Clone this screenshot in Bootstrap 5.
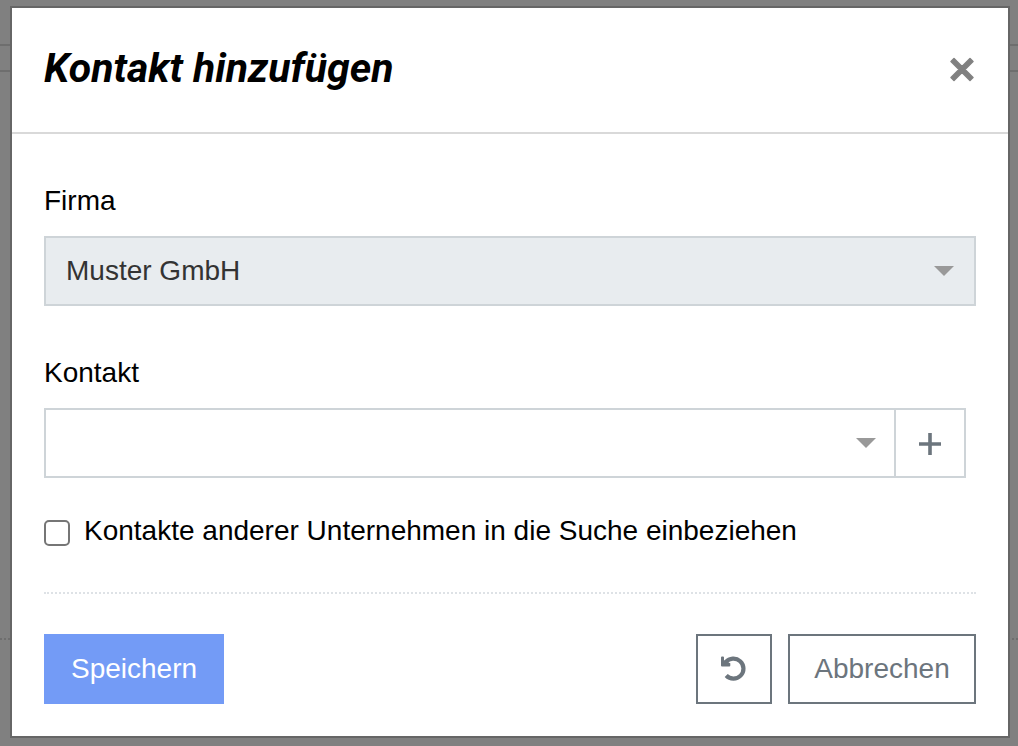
<!DOCTYPE html>
<html lang="de">
<head>
<meta charset="utf-8">
<meta name="viewport" content="width=device-width, initial-scale=1">
<title>Kontakt hinzufügen</title>
<link href="https://cdn.jsdelivr.net/npm/bootstrap@5.3.0/dist/css/bootstrap.min.css" rel="stylesheet">
<style>
  body { background: #808080; font-family: "Liberation Sans", Arial, sans-serif; font-size: 28px; line-height: 42px; color: #000; }
  .page-top { height: 44px; }
  .page-bar { height: 28px; border-top: 2px solid #6e6e6e; border-bottom: 2px solid #6e6e6e; }
  .page-main { height: 568px; border-bottom: 2px dotted #6e6e6e; }
  .contact-dialog { max-width: none; margin: 6px 8px 8px 10px; }
  .contact-dialog .modal-content { border: 2px solid #666; border-radius: 0; color: #000; }
  .contact-dialog .modal-header { border-bottom: 2px solid #d9d9d9; border-radius: 0; padding: 30px 32px 34px; }
  .contact-dialog .modal-title { font: italic 700 41px/60px Roboto, sans-serif; }
  .contact-dialog .modal-body { padding: 46px 32px 32px; }
  .field { margin-bottom: 46px; }
  .field .form-label { display: block; margin-bottom: 14px; }
  .field .form-select { height: 70px; border: 2px solid #ced4d8; border-radius: 0; padding: 0 60px 0 20px; font-size: 28px; line-height: 42px; color: #333; background-image: url("data:image/svg+xml,%3Csvg xmlns='http://www.w3.org/2000/svg' viewBox='0 0 20 10'%3E%3Cpath d='M0 0h20L10 10z' fill='%23999'/%3E%3C/svg%3E"); background-size: 20px 10px; background-position: right 20px center; }
  .field .form-select:disabled { background-color: #e8ecef; opacity: 1; }
  .contact-picker { padding-right: 10px; }
  .contact-picker .form-select { background-position: right 18px center; }
  .btn { --bs-btn-border-width: 2px; --bs-btn-border-radius: 0; --bs-btn-font-size: 28px; --bs-btn-line-height: 42px; --bs-btn-padding-y: 12px; --bs-btn-padding-x: 24px; }
  .btn-outline-secondary { --bs-btn-color: #6c757d; --bs-btn-border-color: #6c757d; }
  .contact-picker .btn-add { --bs-btn-border-color: #ced4d8; --bs-btn-padding-x: 0; width: 72px; margin-left: -2px !important; }
  .btn-save { --bs-btn-color: #fff; --bs-btn-bg: #739bf6; --bs-btn-border-color: #739bf6; --bs-btn-hover-color: #fff; --bs-btn-hover-bg: #5c89ee; min-width: 180px; }
  .btn-cancel { --bs-btn-padding-x: 0; min-width: 188px; }
  .btn-reset { --bs-btn-padding-x: 0; width: 76px; }
  .close-dialog { width: 28px; height: 30px; color: #808080; }
  .search-all { width: 26px; height: 26px; margin: 4px 14px 0 0; appearance: none; background: #fff; border: 2px solid #767676; border-radius: 5px; flex: none; }
  .search-all:checked { background: #739bf6; }
  .dialog-actions { margin-top: 40px; padding-top: 40px; border-top: 2px dotted #dee2e6; }
</style>
</head>
<body>
<div class="page-top"></div>
<div class="page-bar"></div>
<div class="page-main"></div>

<div class="modal d-block" role="dialog" aria-modal="true" aria-labelledby="dialogTitle">
  <div class="modal-dialog contact-dialog">
    <div class="modal-content">
      <div class="modal-header d-flex justify-content-between align-items-center">
        <h1 class="modal-title" id="dialogTitle">Kontakt hinzufügen</h1>
        <button type="button" class="close-dialog border-0 bg-transparent p-0 d-flex align-items-center justify-content-center" aria-label="Schließen">
          <svg width="28" height="30" viewBox="0 0 28 30" aria-hidden="true"><path d="M6 1.500l8 8 8-8M6 1.500" fill="none"/><path d="M6 5.500L14 13.500L22 5.500L25 8.500L17 16.500L25 24.500L22 27.500L14 19.500L6 27.500L3 24.500L11 16.500L3 8.500Z" fill="currentColor" stroke="currentColor" stroke-width="1.500" stroke-linejoin="round"/></svg>
        </button>
      </div>
      <form class="modal-body">
        <div class="field">
          <label class="form-label" for="company">Firma</label>
          <select class="form-select" id="company" disabled><option>Muster GmbH</option></select>
        </div>
        <div class="field mb-0">
          <label class="form-label" for="contact">Kontakt</label>
          <div class="contact-picker input-group flex-nowrap">
            <select class="form-select" id="contact"><option></option></select>
            <button type="button" class="btn btn-outline-secondary btn-add d-flex align-items-center justify-content-center" aria-label="Neuer Kontakt">
              <svg width="22" height="24" viewBox="0 0 22 24" aria-hidden="true"><path d="M11 2v22M0 13h22" stroke="currentColor" stroke-width="3.600"/></svg>
            </button>
          </div>
        </div>
        <div class="d-flex align-items-center mt-4 pt-2">
          <input class="search-all" type="checkbox" id="searchAll">
          <label for="searchAll">Kontakte anderer Unternehmen in die Suche einbeziehen</label>
        </div>
        <div class="dialog-actions d-flex gap-3">
          <button type="submit" class="btn btn-save me-auto">Speichern</button>
          <button type="reset" class="btn btn-outline-secondary btn-reset d-flex align-items-center justify-content-center" aria-label="Zurücksetzen">
            <svg width="26" height="26" viewBox="0 0 26 26" aria-hidden="true"><path d="M4.800 6.200A10 10 0 1 1 5.200 19.500" fill="none" stroke="currentColor" stroke-width="4.200"/><path d="M0 1.500Q0 .5 1 .5H2Q3 .5 3 1.500V4.600L5.500 4L7.500 6.600L9.300 7.200V9.500Q9.300 10.500 8.300 10.500H1Q0 10.500 0 9.500z" fill="currentColor"/></svg>
          </button>
          <button type="button" class="btn btn-outline-secondary btn-cancel">Abbrechen</button>
        </div>
      </form>
    </div>
  </div>
</div>
<script src="https://cdn.jsdelivr.net/npm/bootstrap@5.3.0/dist/js/bootstrap.bundle.min.js"></script>
</body>
</html>
